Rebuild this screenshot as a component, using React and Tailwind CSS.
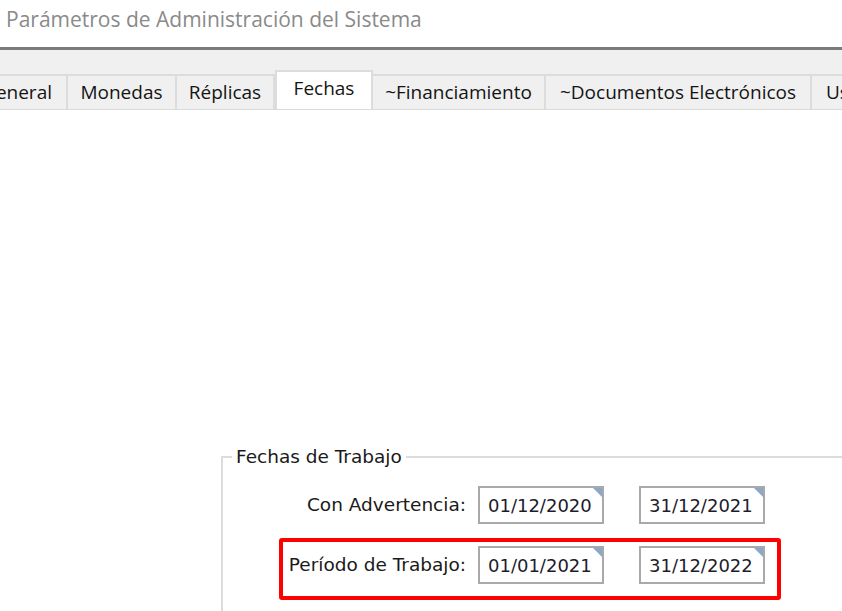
import React from 'react';

const tabs = [
  { label: 'General', w: 'w-[68px]', align: 'justify-end pr-[14px]' },
  { label: 'Monedas', w: 'w-[109px]' },
  { label: 'Réplicas', w: 'w-[98px]' },
  { label: 'Fechas', w: 'w-[98px]', active: true },
  { label: '~Financiamiento', w: 'w-[173px]' },
  { label: '~Documentos Electrónicos', w: 'w-[266px]' },
  { label: 'Usuarios', w: 'w-[60px]', align: 'justify-start pl-[14px]' },
];

function DateBox({ value }) {
  return (
    <div className="relative h-[38px] w-[126px] border-2 border-[#a9a9a9] bg-white flex items-center pl-[8px] text-[18px] text-[#1c1c2c]">
      {value}
      <span className="absolute top-0 right-0 w-0 h-0 border-t-[9px] border-l-[9px] border-t-[#8ea7c8] border-l-transparent" />
    </div>
  );
}

function DateRow({ label, from, to, marked }) {
  return (
    <div className={`flex items-center w-[502px] pr-[12px] pt-[4px] pb-[12px] rounded-[3px] border-4 ${marked ? 'border-[#ff0000] -mt-[2px]' : 'border-transparent'}`}>
      <div className="w-[195px] shrink-0 pr-[12px] flex justify-end whitespace-nowrap text-[18.5px] text-[#1a1a1a]">{label}</div>
      <DateBox value={from} />
      <div className="w-[35px]" />
      <DateBox value={to} />
    </div>
  );
}

export default function App() {
  return (
    <div className="w-[842px] h-[611px] overflow-hidden bg-white" style={{ fontFamily: '"DejaVu Sans", Tahoma, sans-serif' }}>
      {/* title */}
      <div className="h-[47px] pl-[6px] pt-[4px] text-[21px] text-[#8a8a8a]" style={{ fontFamily: '"Open Sans", "Segoe UI", sans-serif' }}>
        Parámetros de Administración del Sistema
      </div>
      <div className="h-[3px] bg-[#7b7b7b]" />

      {/* tab strip */}
      <div className="h-[60px] bg-[#f0f0f0] flex items-end overflow-hidden border-b border-[#dadada]" style={{ fontFamily: '"Open Sans", "Segoe UI", sans-serif' }}>
        {tabs.map((t) => (
          <div
            key={t.label}
            className={`shrink-0 ${t.w} flex items-center border-r-2 border-[#dcdcdc] text-[19px] text-[#141414] whitespace-nowrap overflow-hidden ${
              t.active
                ? 'h-[40px] bg-white border-t-2 border-l-2 justify-center pb-[6px] -mb-px'
                : 'h-[35px] border-t-2 ' + (t.align || 'justify-center')
            }`}
          >
            {t.label}
          </div>
        ))}
      </div>

      {/* content */}
      <div className="pt-[336px] pl-[221px]">
        <fieldset className="border-t-2 border-l-2 border-[#dcdcdc] pb-[20px]">
          <legend className="ml-[9px] px-[4px] leading-[22px] text-[18.5px] text-[#1a1a1a]">Fechas de Trabajo</legend>
          <div className="pt-[10px] pl-[56px]">
            <DateRow label="Con Advertencia:" from="01/12/2020" to="31/12/2021" />
            <DateRow label="Período de Trabajo:" from="01/01/2021" to="31/12/2022" marked />
          </div>
        </fieldset>
      </div>
    </div>
  );
}
